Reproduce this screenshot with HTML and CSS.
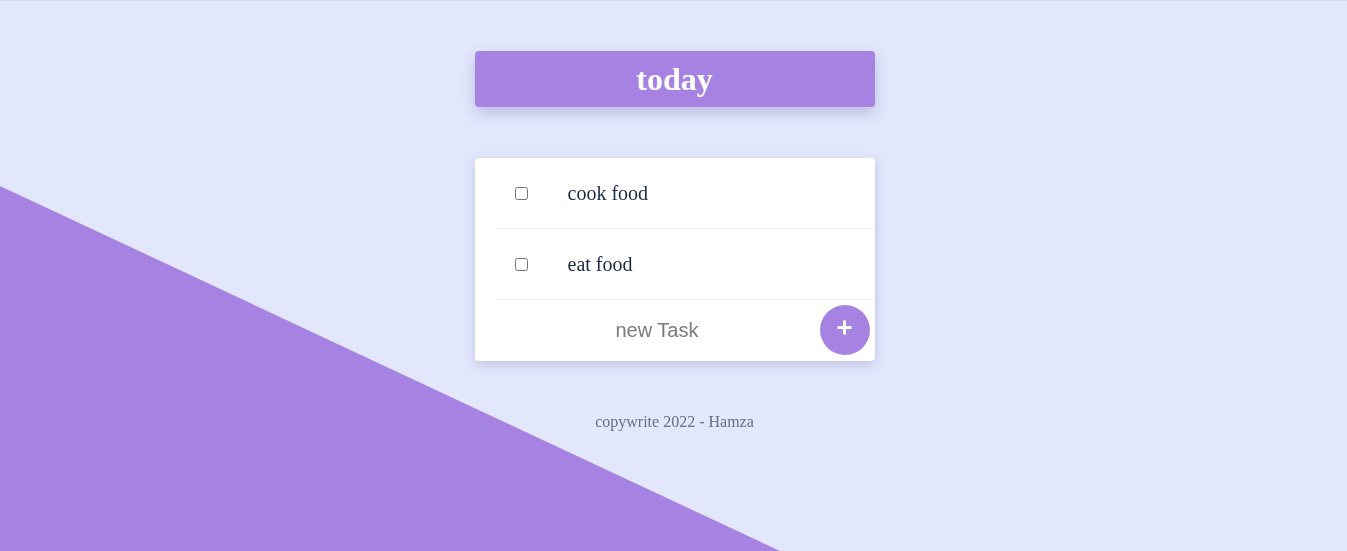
FILE: index.html
```html
<!DOCTYPE html>
<html lang="en">
<head>
<meta charset="utf-8">
<title>today</title>
<link rel="stylesheet" href="styles.css">
</head>
<body>
<div class="bg-shape"></div>
<main class="app">
  <header class="header"><h1>today</h1></header>
  <section class="card">
    <div class="item"><input type="checkbox" class="check"><span class="label">cook food</span></div>
    <div class="item"><input type="checkbox" class="check"><span class="label">eat food</span></div>
    <form class="new-task">
      <input type="text" class="task-input" placeholder="new Task">
      <button type="button" class="add-btn" aria-label="add">
        <svg width="15" height="15" viewBox="0 0 15 15"><path d="M7.5 0.5v14M0.5 7.5h14" stroke="#fff" stroke-width="3"/></svg>
      </button>
    </form>
  </section>
  <footer class="footer">copywrite 2022 - Hamza</footer>
</main>
</body>
</html>
```
FILE: styles.css
```css
html, body { height: 100%; }
body {
  margin: 0;
  padding-left: 2px;
  background: #e2e7fc;
  border-top: 1px solid #d3d8ea;
  box-sizing: border-box;
  font-family: "Liberation Serif", "Times New Roman", serif;
  overflow: hidden;
}
.bg-shape {
  position: fixed;
  inset: 0;
  background: #a683e2;
  clip-path: polygon(0 186px, 780px 551px, 0 551px);
  z-index: 0;
}
.app {
  position: relative;
  z-index: 1;
  width: 400px;
  margin: 0 auto;
  padding-top: 50px;
}
.header {
  height: 56px;
  background: #a683e2;
  border-radius: 4px;
  box-shadow: 0 6px 14px rgba(90, 80, 150, 0.28);
  display: flex;
  align-items: center;
  justify-content: center;
}
.header h1 {
  margin: 0;
  color: #fff;
  font-size: 32px;
  font-weight: bold;
  line-height: 1;
}
.card {
  margin-top: 51px;
  background: #fff;
  border-radius: 4px;
  box-shadow: 0 4px 12px rgba(90, 80, 150, 0.24);
}
.item {
  height: 70px;
  margin-left: 20px;
  border-bottom: 1px solid #eef0f3;
  display: flex;
  align-items: center;
}
.check {
  width: 13px;
  height: 13px;
  margin: 0 0 0 20px;
}
.label {
  margin-left: 40px;
  font-size: 20px;
  color: #1b2944;
}
.new-task {
  height: 61px;
  margin: 0 0 0 20px;
  display: flex;
  align-items: flex-start;
  padding-right: 5px;
}
.task-input {
  flex: 1;
  align-self: center;
  border: none;
  outline: none;
  background: transparent;
  text-align: center;
  font-family: "Liberation Sans", Arial, sans-serif;
  font-size: 20px;
  color: #333;
  padding: 0;
}
.task-input::placeholder { color: #7a7a7a; }
.add-btn {
  width: 50px;
  height: 50px;
  margin-top: 5px;
  border-radius: 50%;
  border: none;
  background: #a683e2;
  display: flex;
  align-items: center;
  justify-content: center;
  padding: 0 0 6px 0;
  cursor: pointer;
}
.footer {
  margin-top: 52px;
  text-align: center;
  font-size: 16px;
  color: #6c6c7e;
}
```
